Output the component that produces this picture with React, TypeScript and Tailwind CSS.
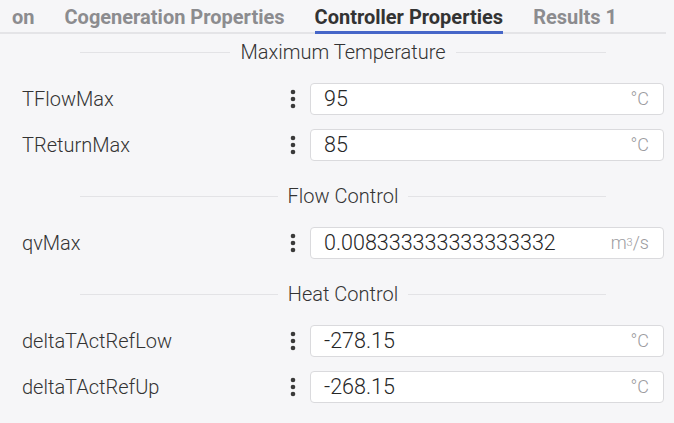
import React from "react";

type Field = { name: string; value: string; unit: React.ReactNode };

const sections: { title: string; fields: Field[] }[] = [
  {
    title: "Maximum Temperature",
    fields: [
      { name: "TFlowMax", value: "95", unit: "°C" },
      { name: "TReturnMax", value: "85", unit: "°C" },
    ],
  },
  {
    title: "Flow Control",
    fields: [
      {
        name: "qvMax",
        value: "0.008333333333333332",
        unit: (
          <>
            m<sup className="text-[11px] relative -top-[3px]">3</sup>/s
          </>
        ),
      },
    ],
  },
  {
    title: "Heat Control",
    fields: [
      { name: "deltaTActRefLow", value: "-278.15", unit: "°C" },
      { name: "deltaTActRefUp", value: "-268.15", unit: "°C" },
    ],
  },
];

const tabs = [
  { label: "on", active: false },
  { label: "Cogeneration Properties", active: false },
  { label: "Controller Properties", active: true },
  { label: "Results 1", active: false },
];

function Kebab() {
  return (
    <svg width="12" height="20" viewBox="0 0 12 20" className="text-[#3a3a3a]">
      <circle cx="6" cy="3" r="2.3" fill="currentColor" />
      <circle cx="6" cy="10" r="2.3" fill="currentColor" />
      <circle cx="6" cy="17" r="2.3" fill="currentColor" />
    </svg>
  );
}

function SectionTitle({ title }: { title: string }) {
  return (
    <div className="flex items-center h-[36px] mx-[58px] mb-[6px] gap-[10px]">
      <div className="flex-1 h-px bg-[#e3e3e6]" />
      <span className="text-[20px] font-light text-[#333] leading-none">{title}</span>
      <div className="flex-1 h-px bg-[#e3e3e6]" />
    </div>
  );
}

function FieldRow({ field }: { field: Field }) {
  return (
    <div className="flex items-center h-[46px]">
      <div className="w-[265px] text-[20px] font-light text-[#333] leading-none">{field.name}</div>
      <Kebab />
      <div className="ml-[11px] w-[354px] h-[32px] bg-white border border-[#dadadd] rounded-[4px] flex items-center justify-between pl-[13px] pr-[14px]">
        <span className="text-[21.5px] font-light text-[#262626] leading-none">{field.value}</span>
        <span className="text-[18px] font-light text-[#9c9ca0] leading-none">{field.unit}</span>
      </div>
    </div>
  );
}

export default function App() {
  return (
    <div
      className="w-[674px] h-[423px] overflow-hidden bg-[#f6f6f8]"
      style={{ fontFamily: "Roboto, 'Liberation Sans', sans-serif" }}
    >
      <div className="w-[666px]">
        <div className="h-[34px] border-b-2 border-[#e4e4e7] flex items-stretch gap-[30px] pl-[12px]">
          {tabs.map((t) => (
            <div
              key={t.label}
              className={
                t.active
                  ? "flex items-center -mb-[2px] border-b-[3px] border-[#4666c8] text-[20px] font-bold text-[#333] pt-[2px]"
                  : "flex items-center text-[20px] font-bold text-[#8c8c8f] pt-[1px]"
              }
            >
              {t.label}
            </div>
          ))}
        </div>
        <div className="pl-[22px] pr-[2px] space-y-[10px]">
          {sections.map((s) => (
            <div key={s.title}>
              <SectionTitle title={s.title} />
              {s.fields.map((f) => (
                <FieldRow key={f.name} field={f} />
              ))}
            </div>
          ))}
        </div>
      </div>
    </div>
  );
}
